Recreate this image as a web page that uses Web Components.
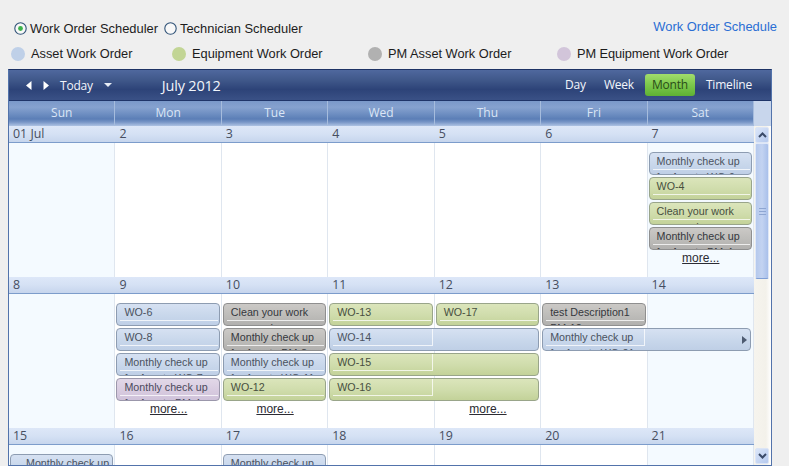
<!DOCTYPE html>
<html>
<head>
<meta charset="utf-8">
<title>Work Order Schedule</title>
<style>
  body { margin: 0; background: #efefef; font-family: "Liberation Sans", Arial, sans-serif; overflow: hidden; }
</style>
</head>
<body>
<wo-page>
  <sched-options slot="options"></sched-options>
  <sched-legend slot="legend"></sched-legend>
  <sched-panel slot="panel">
    <cal-week>
      <cal-date col="1">01 Jul</cal-date><cal-date col="2">2</cal-date><cal-date col="3">3</cal-date><cal-date col="4">4</cal-date><cal-date col="5">5</cal-date><cal-date col="6">6</cal-date><cal-date col="7">7</cal-date>
      <cal-cell col="1" weekend></cal-cell><cal-cell col="2"></cal-cell><cal-cell col="3"></cal-cell><cal-cell col="4"></cal-cell><cal-cell col="5"></cal-cell><cal-cell col="6"></cal-cell><cal-cell col="7" weekend></cal-cell>
      <cal-event col="7" row="3" kind="blue">Monthly check up for Asset : WO-9</cal-event>
      <cal-event col="7" row="4" kind="green">WO-4</cal-event>
      <cal-event col="7" row="5" kind="green">Clean your work<br>&nbsp;&nbsp;&nbsp;&nbsp;&nbsp;&nbsp;&nbsp;&nbsp;&nbsp;order</cal-event>
      <cal-event col="7" row="6" kind="grey">Monthly check up for Asset : PM-4</cal-event>
      <cal-more col="7"></cal-more>
    </cal-week>
    <cal-week>
      <cal-date col="1">8</cal-date><cal-date col="2">9</cal-date><cal-date col="3">10</cal-date><cal-date col="4">11</cal-date><cal-date col="5">12</cal-date><cal-date col="6">13</cal-date><cal-date col="7">14</cal-date>
      <cal-cell col="1" weekend></cal-cell><cal-cell col="2"></cal-cell><cal-cell col="3"></cal-cell><cal-cell col="4"></cal-cell><cal-cell col="5"></cal-cell><cal-cell col="6"></cal-cell><cal-cell col="7" weekend></cal-cell>
      <cal-event col="2" row="3" kind="blue">WO-6</cal-event>
      <cal-event col="2" row="4" kind="blue">WO-8</cal-event>
      <cal-event col="2" row="5" kind="blue">Monthly check up for Asset : WO-7</cal-event>
      <cal-event col="2" row="6" kind="purple">Monthly check up for Asset : PM-4</cal-event>
      <cal-event col="3" row="3" kind="grey">Clean your work<br>&nbsp;&nbsp;&nbsp;&nbsp;&nbsp;&nbsp;&nbsp;&nbsp;&nbsp;order</cal-event>
      <cal-event col="3" row="4" kind="grey">Monthly check up for Asset : PM-8</cal-event>
      <cal-event col="3" row="5" kind="blue">Monthly check up for Asset : WO-11</cal-event>
      <cal-event col="3" row="6" kind="green">WO-12</cal-event>
      <cal-event col="4" row="3" kind="green">WO-13</cal-event>
      <cal-event col="5" row="3" kind="green">WO-17</cal-event>
      <cal-event col="4" row="4" span="2" kind="blue">WO-14</cal-event>
      <cal-event col="4" row="5" span="2" kind="green">WO-15</cal-event>
      <cal-event col="4" row="6" span="2" kind="green">WO-16</cal-event>
      <cal-event col="6" row="3" kind="grey">test Description1<br>PM-12</cal-event>
      <cal-event col="6" row="4" span="2" kind="blue" continues>Monthly check up for Asset : WO-21</cal-event>
      <cal-more col="2"></cal-more><cal-more col="3"></cal-more><cal-more col="5"></cal-more>
    </cal-week>
    <cal-week>
      <cal-date col="1">15</cal-date><cal-date col="2">16</cal-date><cal-date col="3">17</cal-date><cal-date col="4">18</cal-date><cal-date col="5">19</cal-date><cal-date col="6">20</cal-date><cal-date col="7">21</cal-date>
      <cal-cell col="1" weekend></cal-cell><cal-cell col="2"></cal-cell><cal-cell col="3"></cal-cell><cal-cell col="4"></cal-cell><cal-cell col="5"></cal-cell><cal-cell col="6"></cal-cell><cal-cell col="7" weekend></cal-cell>
      <cal-event col="1" row="3" kind="blue" style="--pad:15px">Monthly check up for Asset : WO-3</cal-event>
      <cal-event col="3" row="3" kind="blue">Monthly check up for Asset : WO-5</cal-event>
    </cal-week>
  </sched-panel>
</wo-page>

<script>
function define(name, css, html, setup) {
  customElements.define(name, class extends HTMLElement {
    constructor() {
      super();
      this.attachShadow({ mode: 'open' }).innerHTML = `<style>${css}</style>${html}`;
    }
    connectedCallback() {
      if (setup) setup(this);
    }
  });
}

define('wo-page', `
  :host { display: block; height: 466px; }
`, `
  <slot name="options"></slot>
  <slot name="legend"></slot>
  <slot name="panel"></slot>
`);

define('sched-options', `
  :host { display: flex; align-items: center; height: 22px; padding: 17px 12px 0 14px; font-size: 12.9px; color: #1c1c1c; }
  label { display: flex; align-items: center; }
  label svg { margin-right: 3px; }
  .second { margin-left: 6px; }
  a { margin-left: auto; color: #2a6ed4; margin-top: -3px; font-size: 12.9px; }
`, `
  <label>
    <svg width="13" height="13" viewBox="0 0 13 13"><circle cx="6.5" cy="6.5" r="5.7" fill="#f8f8f8" stroke="#2f5277" stroke-width="1.1"/><circle cx="6.5" cy="6.5" r="2.4" fill="#3cb34a"/></svg>
    Work Order Scheduler
  </label>
  <label class="second">
    <svg width="13" height="13" viewBox="0 0 13 13"><circle cx="6.5" cy="6.5" r="5.7" fill="#f8f8f8" stroke="#2f5277" stroke-width="1.1"/></svg>
    Technician Scheduler
  </label>
  <a>Work Order Schedule</a>
`);

define('sched-legend', `
  :host { display: flex; box-sizing: border-box; height: 30px; padding: 0 0 1px 11px; align-items: center; font-size: 12.8px; color: #1c1c1c; }
  div { display: flex; align-items: center; gap: 6px; }
  div:nth-of-type(1) { width: 161px; }
  div:nth-of-type(2) { width: 196px; }
  div:nth-of-type(3) { width: 189px; }
  div:nth-of-type(4) { letter-spacing: -.1px; }
  i { width: 14px; height: 14px; border-radius: 50%; }
`, `
  <div><i style="background:#bfd0e8"></i>Asset Work Order</div>
  <div><i style="background:#c2d595"></i>Equipment Work Order</div>
  <div><i style="background:#b1b1b1"></i>PM Asset Work Order</div>
  <div><i style="background:#d2c5da"></i>PM Equipment Work Order</div>
`);

define('sched-panel', `
  :host { display: flex; flex-direction: column; box-sizing: border-box; width: 764px; height: 397px; margin-left: 8px; border: 1px solid #5273ab; border-top-color: #1d3264; overflow: hidden; font-family: "Open Sans", sans-serif; }
  .bar { display: flex; align-items: center; flex: none; box-sizing: border-box; height: 31px; padding: 0 12px 0 17px; color: #f2f5fb; font-size: 12px; letter-spacing: -.2px;
    background: linear-gradient(#4f689e, #3f5789 35%, #2d4378 65%, #3a5186); border-bottom: 1px solid #1f3468; }
  .nav { display: flex; align-items: center; gap: 11px; }
  .today { margin-left: 11px; }
  .caret { margin-left: 11px; }
  .title { margin-left: 50px; font-size: 14.5px; }
  .views { margin-left: auto; display: flex; gap: 4px; align-items: center; }
  .views span { padding: 0 7px; line-height: 22px; border-radius: 3px; }
  .views .on { box-sizing: border-box; width: 50px; padding: 0; text-align: center; color: #2a4d18; background: linear-gradient(#a2dd6c, #7bc84b 50%, #5fb133); }
  .head { display: flex; flex: none; height: 25px; background: #c8d6ec; }
  .days { flex: none; width: 745px; display: grid; grid-template-columns: repeat(7, 1fr); color: #dbe6f6; font-size: 12px;
    background: linear-gradient(#7a98c9, #86a2cf 25%, #6b8cc0 55%, #5b7eb6 72%, #7795c6 84%, #aec3e3); }
  .days span { display: flex; align-items: center; justify-content: center; border-right: 1px solid #a6bcdd; padding-bottom: 2px; }
  .body { display: flex; flex: 1; min-height: 0; }
  .weeks { flex: none; width: 745px; }
  .track { flex: 1; display: flex; flex-direction: column; box-sizing: border-box; padding: 1px 2px 1px 1px; background: linear-gradient(90deg, #f6f4ee, #f3f1ea 70%, #fff); }
  .btn { flex: none; height: 16px; display: flex; align-items: center; justify-content: center; box-sizing: border-box; border: 1px solid #dce5f5; border-radius: 2px; background: linear-gradient(135deg, #dbe6f9, #b5c9ee); }
  .thumb { flex: none; height: 136px; box-sizing: border-box; display: flex; align-items: center; justify-content: center; border: 1px solid #dfe8f8; border-bottom-color: #7f9fd6; border-radius: 2px; background: linear-gradient(90deg, #b5c9ed, #c3d3f1 50%, #a9c0ea); }
  .gap { flex: 1; }
`, `
  <div class="bar">
    <div class="nav">
      <svg width="6" height="9" viewBox="0 0 6 9"><path d="M5.5 0V9L0 4.5Z" fill="#fff"/></svg>
      <svg width="6" height="9" viewBox="0 0 6 9"><path d="M.5 0V9L6 4.5Z" fill="#fff"/></svg>
    </div>
    <span class="today">Today</span>
    <svg class="caret" width="8" height="4" viewBox="0 0 8 4"><path d="M0 0H8L4 4Z" fill="#e8edf6"/></svg>
    <span class="title">July 2012</span>
    <div class="views"><span>Day</span><span>Week</span><span class="on">Month</span><span>Timeline</span></div>
  </div>
  <div class="head">
    <div class="days"><span>Sun</span><span>Mon</span><span>Tue</span><span>Wed</span><span>Thu</span><span>Fri</span><span>Sat</span></div>
  </div>
  <div class="body">
    <div class="weeks"><slot></slot></div>
    <div class="track">
      <div class="btn"><svg width="9" height="6" viewBox="0 0 9 6"><path d="M1 5L4.5 1.5 8 5" fill="none" stroke="#3a4a68" stroke-width="2"/></svg></div>
      <div class="thumb"><svg width="7" height="7" viewBox="0 0 7 7"><path d="M0 .5H7M0 3.5H7M0 6.5H7" stroke="#8ea6d2"/></svg></div>
      <div class="gap"></div>
      <div class="btn"><svg width="9" height="6" viewBox="0 0 9 6"><path d="M1 1L4.5 4.5 8 1" fill="none" stroke="#3a4a68" stroke-width="2"/></svg></div>
    </div>
  </div>
`);

// every part of a week sits in the same grid, so events can span day cells
define('cal-week', `
  :host { display: grid; height: 151px; grid-template-columns: repeat(7, 1fr); grid-template-rows: 17px 9px repeat(4, 25px) 1fr; }
`, `<slot></slot>`);

const placeInColumn = el => {
  const col = el.getAttribute('col');
  const span = el.getAttribute('span') || 1;
  el.style.gridColumn = `${col} / span ${span}`;
  el.style.setProperty('--span', span);
};

define('cal-date', `
  :host { grid-row: 1; display: block; box-sizing: border-box; height: 17px; line-height: 15px; padding-left: 4px; font-size: 12.4px; color: #464e60;
    background: linear-gradient(#dde7f8, #d5e1f4 50%, #c6d5ed); border-bottom: 1px solid #7c9ccb; }
`, `<slot></slot>`, placeInColumn);

define('cal-cell', `
  :host { grid-row: 2 / -1; display: block; background: #fff; border-right: 1px solid #dfe6ef; }
  :host([weekend]) { background: #f4faff; }
`, ``, placeInColumn);

define('cal-event', `
  :host { display: block; box-sizing: border-box; height: 23px; margin: 0 2px 0 1px; overflow: hidden; position: relative; z-index: 1;
    border: 1px solid #8d9cb1; border-radius: 4px; font: 10.7px/16.4px "Liberation Sans", Arial, sans-serif; color: #4a5260;
    background: linear-gradient(#d6e1f2, #c8d7eb 55%, #bfcfe6); }
  :host([kind="green"]) { border-color: #99a58a; color: #474f3e; background: linear-gradient(#dbe5bb, #cfdcab 55%, #c3d299); }
  :host([kind="grey"]) { border-color: #8f8f8f; color: #35383d; background: linear-gradient(#cbc9c6, #bdbcb9 55%, #b1b0ae); }
  :host([kind="purple"]) { border-color: #9b97ab; color: #4b4a5c; background: linear-gradient(#e2d8e8, #d8cbe0 55%, #cfc2da); }
  :host([continues]) { margin-right: 3.5px; }
  .line { position: absolute; left: 3px; top: 0; box-sizing: border-box; height: 17px; width: calc(100% / var(--span) - 4px); border-bottom: 1px solid rgba(255,255,255,.75); }
  :host([span]) .line { border-right: 1px solid rgba(255,255,255,.75); }
  .text { padding: 0 0 0 var(--pad, 7px); width: 96px; }
  svg { position: absolute; right: 3px; top: 7px; }
`, `
  <div class="line"></div>
  <div class="text"><slot></slot></div>
`, el => {
  placeInColumn(el);
  el.style.gridRow = el.getAttribute('row');
  if (el.hasAttribute('continues')) {
    el.shadowRoot.querySelector('.line').insertAdjacentHTML('afterend',
      '<svg width="5" height="8" viewBox="0 0 5 8"><path d="M0 0V8L5 4Z" fill="#4d5a70"/></svg>');
  }
});

define('cal-more', `
  :host { grid-row: 7; display: block; position: relative; z-index: 1; text-align: center; font: 12px/13px "Liberation Sans", Arial, sans-serif; color: #2b2b33; text-decoration: underline; }
`, `more...`, placeInColumn);
</script>
</body>
</html>
